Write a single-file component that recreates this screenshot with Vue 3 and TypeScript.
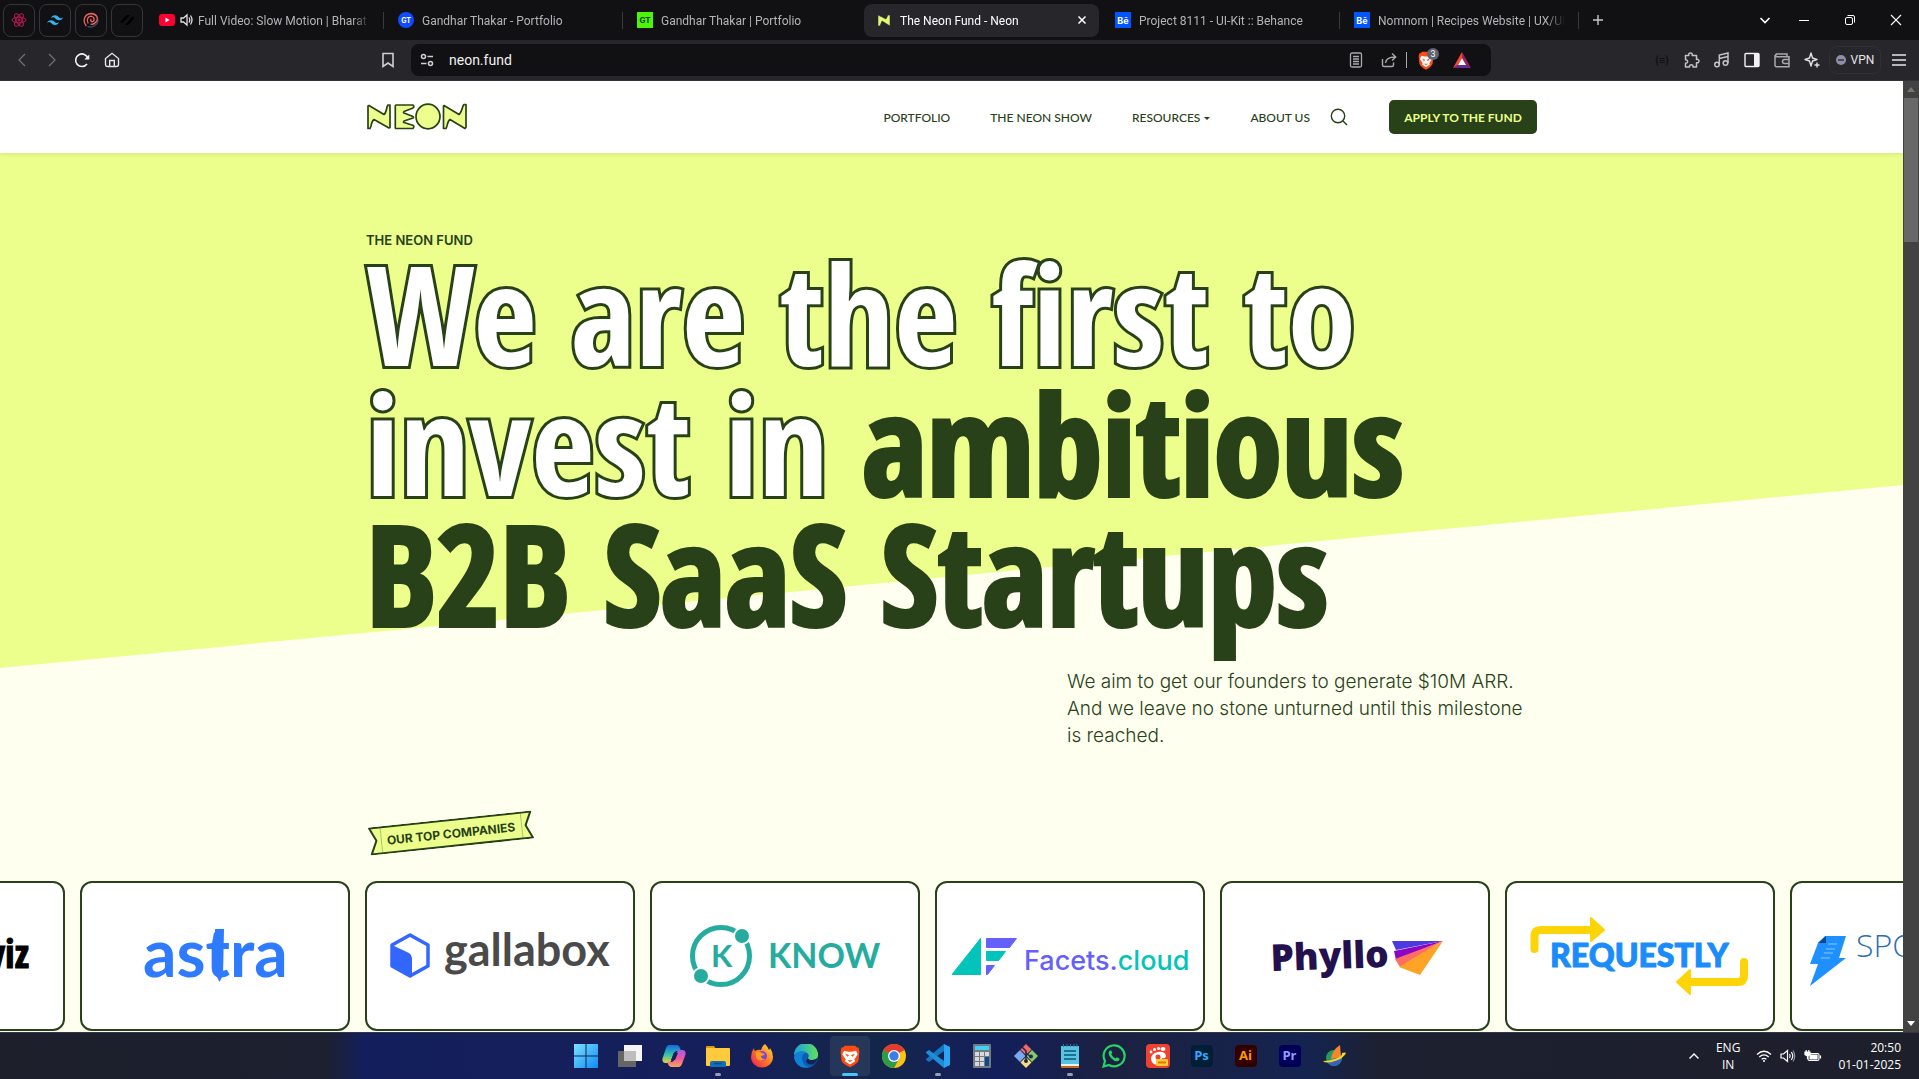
<script setup lang="ts">
import { ref } from 'vue'

interface Tab {
  id: string
  title: string
  kind: 'youtube' | 'gt-blue' | 'gt-green' | 'neon' | 'behance'
  active?: boolean
}

const tabs: Tab[] = [
  { id: 't1', title: 'Full Video: Slow Motion | Bharat', kind: 'youtube' },
  { id: 't2', title: 'Gandhar Thakar - Portfolio', kind: 'gt-blue' },
  { id: 't3', title: 'Gandhar Thakar | Portfolio', kind: 'gt-green' },
  { id: 't4', title: 'The Neon Fund - Neon', kind: 'neon', active: true },
  { id: 't5', title: 'Project 8111 - UI-Kit :: Behance', kind: 'behance' },
  { id: 't6', title: 'Nomnom | Recipes Website | UX/UI', kind: 'behance' },
]

const address = ref('neon.fund')
</script>

<template>
  <div class="desktop">
    <header class="tabstrip">
      <div class="pinned">
        <button class="pin" aria-label="React">
          <svg width="16" height="16" viewBox="0 0 16 16" fill="none" stroke="#b8184f" stroke-width="1">
            <ellipse cx="8" cy="8" rx="7" ry="2.8" /><ellipse cx="8" cy="8" rx="7" ry="2.8" transform="rotate(60 8 8)" /><ellipse cx="8" cy="8" rx="7" ry="2.8" transform="rotate(120 8 8)" /><circle cx="8" cy="8" r="1" fill="#c2185b" />
          </svg>
        </button>
        <button class="pin" aria-label="Tailwind">
          <svg width="16" height="16" viewBox="0 0 24 24" fill="#2fb4f0"><path d="M12 5c-3.200 0-5.200 1.600-6 4.800 1.200-1.600 2.600-2.200 4.200-1.800.9.2 1.600.9 2.300 1.600C13.700 10.800 15 12.200 18 12.200c3.200 0 5.200-1.600 6-4.800-1.200 1.600-2.600 2.200-4.200 1.800-.9-.2-1.600-.9-2.300-1.600C16.300 6.400 15 5 12 5zM6 12.200c-3.200 0-5.200 1.600-6 4.800 1.200-1.600 2.600-2.200 4.200-1.800.9.2 1.600.9 2.300 1.600C7.700 18 9 19.400 12 19.400c3.200 0 5.200-1.600 6-4.800-1.200 1.600-2.600 2.200-4.200 1.800-.9-.2-1.600-.9-2.300-1.600-1.200-1.200-2.500-2.600-5.500-2.600z" /></svg>
        </button>
        <button class="pin" aria-label="Swirl">
          <svg width="16" height="16" viewBox="0 0 16 16" fill="none" stroke-width="1.300" stroke-linecap="round"><path d="M5 14.700c5 1.300 10-2 10-7" stroke="#3c4a66" /><path d="M3 13.500C-.5 9 1 2 8 1.500c5.500 0 8 5 5 8.500-1.500 1.800-3.500 2.500-5 2.200" stroke="#f0655a" /><path d="M5 11C3 7 5.500 4 8.500 4.300c3 .4 3.500 4 1.500 5.200-1.500.8-2.800-.6-2-2" stroke="#f0655a" /></svg>
        </button>
        <button class="pin" aria-label="Slashes">
          <svg width="16" height="16" viewBox="0 0 16 16" fill="#000"><path d="M1 10 8 3h3L3 11zM6 13l7-8h2v2l-6 6z" /></svg>
        </button>
      </div>
      <div class="tabs" role="tablist">
        <div v-for="tab in tabs" :key="tab.id" class="tab" :class="{ active: tab.active }" role="tab" :aria-selected="!!tab.active">
          <template v-if="tab.kind === 'youtube'">
            <svg width="16" height="16" viewBox="0 0 16 16"><rect y="2" width="16" height="12" rx="3" fill="#f03" /><path d="M6.500 5.500v5L10.500 8z" fill="#fff" /></svg>
            <svg class="sound" width="13" height="14" viewBox="0 0 13 14" fill="none" stroke="#e0e0e0" stroke-width="1.300"><path d="M1 5h2.500L7 2v10L3.500 9H1z" /><path d="M9 4.500q1.500 2.500 0 5M10.500 2.500q3 4.500 0 9" /></svg>
          </template>
          <svg v-else-if="tab.kind === 'neon'" width="16" height="14" viewBox="0 0 16 14"><path d="M2 2 10 6l2-4h2v11L6 8l-2 5H2z" fill="#e6f87c" stroke="#24331a" stroke-width=".6" /></svg>
          <span v-else class="fav" :class="tab.kind">{{ tab.kind === 'behance' ? 'Bē' : 'GT' }}</span>
          <span class="title">{{ tab.title }}</span>
          <button v-if="tab.active" class="close" aria-label="Close tab">
            <svg width="10" height="10" viewBox="0 0 10 10" stroke="#fff" stroke-width="1.500"><path d="M1.500 1.500l7 7M8.500 1.500l-7 7" /></svg>
          </button>
        </div>
      </div>
      <button class="plain newtab" aria-label="New tab"><svg width="12" height="12" viewBox="0 0 12 12" stroke="#c8c8c8" stroke-width="1.400"><path d="M6 1v10M1 6h10" /></svg></button>
      <div class="winctl">
        <button class="plain" aria-label="Search tabs"><svg width="12" height="12" viewBox="0 0 12 12" fill="none" stroke="#fff" stroke-width="1.600"><path d="M1.500 4 6 8.500 10.500 4" /></svg></button>
        <button class="plain" aria-label="Minimize"><svg width="12" height="12" viewBox="0 0 12 12" stroke="#fff"><path d="M1 6.500h10" /></svg></button>
        <button class="plain" aria-label="Restore"><svg width="12" height="12" viewBox="0 0 12 12" fill="none" stroke="#fff"><rect x="1.500" y="3.500" width="7" height="7" rx="1.500" /><path d="M3.500 1.500H9a1.500 1.500 0 0 1 1.500 1.500v5.500" /></svg></button>
        <button class="plain" aria-label="Close"><svg width="12" height="12" viewBox="0 0 12 12" stroke="#fff" stroke-width="1.100"><path d="M1 1l10 10M11 1 1 11" /></svg></button>
      </div>
    </header>

    <div class="toolbar">
      <div class="navbtns">
        <button class="plain" aria-label="Back"><svg width="10" height="14" viewBox="0 0 10 14" fill="none" stroke="#6f6f75" stroke-width="1.300"><path d="M8 1 2 7l6 6" /></svg></button>
        <button class="plain" aria-label="Forward"><svg width="10" height="14" viewBox="0 0 10 14" fill="none" stroke="#6f6f75" stroke-width="1.300"><path d="M2 1l6 6-6 6" /></svg></button>
        <button class="plain" aria-label="Reload"><svg width="16" height="16" viewBox="0 0 16 16" fill="none" stroke="#f2f2f2" stroke-width="1.600"><path d="M14 6.500A6.300 6.300 0 1 0 13 12" /><path d="M15.300 2.500v5h-5z" fill="#f2f2f2" stroke="none" /></svg></button>
        <button class="plain" aria-label="Home"><svg width="16" height="16" viewBox="0 0 16 16" fill="none" stroke="#e6e6e6" stroke-width="1.400"><path d="M1.500 6.500 8 1.300l6.500 5.200v6a2 2 0 0 1-2 2h-9a2 2 0 0 1-2-2z" /><path d="M5.700 14V8.500h4.600V14" /></svg></button>
        <button class="plain mark" aria-label="Bookmark"><svg width="14" height="18" viewBox="0 0 14 18" fill="none" stroke="#d0d0d4" stroke-width="1.600"><path d="M2 2.500h10v13L7 12l-5 3.500z" /></svg></button>
      </div>
      <div class="omnibox">
        <svg width="14" height="14" viewBox="0 0 14 14" fill="none" stroke="#d0d0d4" stroke-width="1.500"><circle cx="3.500" cy="3.500" r="2" /><path d="M7.500 3.500H13M1 10.500h5.500" /><circle cx="10.500" cy="10.500" r="2" /></svg>
        <input v-model="address" class="url" type="text" aria-label="Address" />
        <svg width="14" height="16" viewBox="0 0 14 16" fill="none" stroke="#a9a9ad" stroke-width="1.300"><rect x="1.500" y="1" width="11" height="14" rx="1.500" /><path d="M4 4.500h6M4 7h6M4 9.500h6M4 12h6" /></svg>
        <svg class="share" width="18" height="16" viewBox="0 0 18 16" fill="none" stroke="#a9a9ad" stroke-width="1.400"><path d="M2.500 7v6a1.500 1.500 0 0 0 1.500 1.500h8a1.500 1.500 0 0 0 1.500-1.500v-2.500" /><path d="M5.500 11C6 7 9 5 15 5M12 1.500 15.700 5 12 8.500" /></svg>
        <span class="sep"></span>
        <span class="shield">
          <svg width="16" height="19" viewBox="0 0 24 28"><path d="M6 1h12l2 2 2 0 1 5-1 10q-1 5-10 10Q3 23 2 18L1 8l1-5h2z" fill="#ff4a12" /><path d="M5 7l5 1h4l5-1 2 5-4 6 1 2-6 4-6-4 1-2-4-6z" fill="#fff" /><path d="M6 11l5 2-2 2zM18 11l-5 2 2 2zM9 19h6l-3 2z" fill="#ff4a12" /></svg>
          <span class="count">3</span>
        </span>
        <svg width="18" height="17" viewBox="0 0 18 17"><path d="M9 0 0 16l5-3 4-7z" fill="#ff4724" /><path d="M9 0l9 16-5-3-4-7z" fill="#9e1f63" /><path d="M0 16h18l-5-3H5z" fill="#662d91" /><path d="M9 6l4 7H5z" fill="#fff" /></svg>
      </div>
      <div class="exts">
        <button class="plain ext faint" aria-label="Code">{≡}</button>
        <button class="plain ext" aria-label="Extensions"><svg width="18" height="18" viewBox="0 0 18 18" fill="none" stroke="#c4c4c8" stroke-width="1.500" stroke-linejoin="round"><path d="M2.500 4.500h3.300c-1-3.500 4.400-3.500 3.400 0h4.300v4c3.300-1 3.300 4.200 0 3.200v4.300h-3.500c.7-3-4-3-3.500 0H2.500v-3.800c2.800.4 2.800-3.600 0-3.400z" /></svg></button>
        <button class="plain ext" aria-label="Music"><svg width="18" height="18" viewBox="0 0 18 18" fill="none" stroke="#c4c4c8" stroke-width="1.500"><circle cx="4" cy="13.500" r="2.300" /><circle cx="12.500" cy="12" r="2.300" /><path d="M6.300 13.500V4L15 2v10M6.300 7.500 15 5.500" /></svg></button>
        <button class="plain ext" aria-label="Sidebar"><svg width="18" height="18" viewBox="0 0 18 18"><rect x="2" y="2.500" width="14" height="13" rx="1" fill="none" stroke="#f2f2f2" stroke-width="1.400" /><path d="M11 2.500h5v13h-5z" fill="#f2f2f2" /></svg></button>
        <button class="plain ext" aria-label="Wallet"><svg width="18" height="18" viewBox="0 0 18 18" fill="none" stroke="#a9a9ad" stroke-width="1.500"><path d="M14 5V3H3.500a1.500 1.500 0 0 0 0 2.700H16v10H3.500A1.500 1.500 0 0 1 2 14V4" /><path d="M16 8.500h-4.500a2 2 0 0 0 0 4H16" /></svg></button>
        <button class="plain ext" aria-label="Leo"><svg width="18" height="18" viewBox="0 0 18 18" fill="none" stroke="#e0e0e4" stroke-width="1.400" stroke-linejoin="round"><path d="M8 2l1.500 5L14 8.500 9.500 10 8 15 6.500 10 2 8.500 6.500 7z" /><path d="M14 11.500v5M11.500 14h5" /></svg></button>
        <button class="vpn"><svg width="10" height="10" viewBox="0 0 10 10"><circle cx="5" cy="5" r="5" fill="#8d8fa6" /><path d="M2 5h6" stroke="#303040" stroke-width="1.500" /></svg>VPN</button>
        <button class="plain menu" aria-label="Menu"><svg width="16" height="14" viewBox="0 0 16 14" stroke="#e6e6e6" stroke-width="1.400"><path d="M1 2h14M1 7h14M1 12h14" /></svg></button>
      </div>
    </div>

    <div class="viewport">
      <div class="page">
        <header class="site-header">
          <div class="container bar">
            <a href="#" aria-label="Neon">
              <svg class="logo" width="102" height="32" viewBox="0 0 102 32" fill="#ecff8c" stroke="#284118" stroke-width="1.700" stroke-linejoin="round">
                <path d="M3 4.500 18 13.500Q20 12 21 6l1-2h2V26.500L23 27 8 18.500Q6 20 5 25L4 27.500H2V5z" />
                <path d="M30 4h17q1.500 1.500 0 3L38 10.500q-1 1 0 1.500l9 3.500q1 1 0 1.500l-9 3q-1 1 0 1.500l9.500 3q1 1.500-.5 3H30q-.7 0-.7-1V5q0-1 .7-1z" />
                <ellipse cx="62" cy="15.500" rx="12" ry="12.300" />
                <path d="M78 4.500 93 13.500Q95 12 97 5l1-1.500h2V26.500L99 27.500 84 18.500Q82 20 81 25l-1 2.500h-2.500V5z" />
              </svg>
            </a>
            <nav class="links" aria-label="Main">
              <a href="#">PORTFOLIO</a>
              <a href="#">THE NEON SHOW</a>
              <a href="#">RESOURCES<span class="caret"></span></a>
              <a href="#">ABOUT US</a>
            </nav>
            <button class="plain find" aria-label="Search"><svg width="18" height="18" viewBox="0 0 18 18" fill="none" stroke="#284118" stroke-width="1.400"><circle cx="8" cy="8" r="6.700" /><path d="M12.800 12.800 17 17" /></svg></button>
            <button class="apply">APPLY TO THE FUND</button>
          </div>
        </header>

        <main class="hero">
          <div class="container">
            <p class="eyebrow">THE NEON FUND</p>
            <h1><span class="outlined">We are the first to<br />invest in</span> ambitious<br />B2B SaaS Startups</h1>
            <p class="lede">We aim to get our founders to generate $10M ARR. And we leave no stone unturned until this milestone is reached.</p>
            <div class="ribbon">
              <svg width="166" height="28" viewBox="0 0 166 28" fill="#ecff8c" stroke="#284118" stroke-width="2" stroke-linejoin="round"><path d="M2 1h162l-6 13 6 13H2l6-13z" /><path d="M13 2v24M154 2v24" stroke-width=".3" /></svg>
              <span>OUR TOP COMPANIES</span>
            </div>
          </div>

          <div class="companies">
            <div class="card">
              <svg viewBox="0 0 266 146"><text class="condensed bold" x="232" y="85" font-size="40" text-anchor="end" fill="#000" stroke="#000">viz</text></svg>
            </div>
            <div class="card">
              <svg viewBox="0 0 266 146" fill="#2f7bff"><text class="lato bold" x="61" y="94" font-size="66">astra</text><path d="M133 46h9l-1 46-3.500 7L134 92z" /></svg>
            </div>
            <div class="card">
              <svg viewBox="0 0 266 146"><path d="M43 52 61 62v21L43 93 25 83V62z" fill="none" stroke="#3366ff" stroke-width="3.500" stroke-linejoin="round" /><path d="M25 62l17 8q3 2 3 5v18l-2 1-18-11z" fill="#3366ff" /><text class="lato bold" x="77" y="83" font-size="45" fill="#4a4a4a">gallabox</text></svg>
            </div>
            <div class="card">
              <svg viewBox="0 0 266 146" fill="#25ac9f"><circle cx="69" cy="73" r="28.500" fill="none" stroke="#25ac9f" stroke-width="5" /><circle cx="90" cy="53" r="8" stroke="#fff" stroke-width="2" /><circle cx="49" cy="93" r="8" stroke="#fff" stroke-width="2" /><text class="lato bold" x="59" y="84" font-size="31">K</text><text class="lato bold" x="116" y="85" font-size="34">KNOW</text></svg>
            </div>
            <div class="card">
              <svg viewBox="0 0 266 146"><g fill="#03c4bb" stroke="#03c4bb" stroke-linejoin="round"><path d="M15 91.500 43.500 55.500v36z" /><path d="M49.500 68.500h19l-7 9h-12z" /></g><g fill="#6560fb" stroke="#6560fb" stroke-linejoin="round"><path d="M49.500 55.500h30l-7 9h-23z" /><path d="M49.500 82.500h8l-7 9h-1z" /></g><text class="inter" x="87" y="87" font-size="27" fill="#6560fb">Facets.<tspan fill="#03c4bb">cloud</tspan></text></svg>
            </div>
            <div class="card">
              <svg viewBox="0 0 266 146"><text class="open heavy" x="49" y="88" font-size="37" fill="#23104f" transform="rotate(-2 50 88)">Phyllo</text><path d="M170 58h51L174 67z" fill="#4a3ae0" /><path d="M172 68 221 58 174 77z" fill="#8a05c8" /><path d="M173 76 221 58 178 84z" fill="#ff6f61" /><path d="M177 84 221 58 198 92z" fill="#ffa326" /></svg>
            </div>
            <div class="card">
              <svg viewBox="0 0 266 146"><g fill="none" stroke="#fdd408" stroke-width="8" stroke-linecap="round"><path d="M27.500 66V53q0-6 6-6H83" /><path d="M184 99h47q6 0 6-6V79" /></g><g fill="#fdd408" stroke="#fdd408" stroke-width="2" stroke-linejoin="round"><path d="M84 35 97 47 84 58z" /><path d="M183 87 170 99l13 12z" /></g><text class="lato black" x="43" y="84" font-size="32" fill="#1a8cfc" stroke="#1a8cfc" stroke-linejoin="round">REQUESTLY</text></svg>
            </div>
            <div class="card">
              <svg viewBox="0 0 266 146"><path d="M33 53h21l-7 22h7L18 103l8-22h-8l8-21z" fill="#1e90ff" /><path d="M34 53v7h-8z" fill="#0b4a92" /><path d="M36 61h9M34 66h9M32 70h9M29 75h9" stroke="#8cc6ff" /><text class="open light" x="64" y="74" font-size="32" fill="#2d6fb5">SPO</text></svg>
            </div>
          </div>
        </main>
      </div>
      <div class="scrollbar">
        <span class="up"></span>
        <span class="thumb"></span>
        <span class="down"></span>
      </div>
    </div>

    <footer class="taskbar">
      <div class="side"></div>
      <div class="apps">
        <button class="app" aria-label="Start"><svg viewBox="0 0 24 24"><defs><linearGradient id="win" x1="0" y1="0" x2="1" y2="1"><stop offset="0" stop-color="#7fe0ff" /><stop offset="1" stop-color="#0a8cf0" /></linearGradient></defs><path d="M0 0h11.500v11.500H0zM12.500 0H24v11.500H12.500zM0 12.500h11.500V24H0zM12.500 12.500H24V24H12.500z" fill="url(#win)" /></svg></button>
        <button class="app" aria-label="Task view"><svg viewBox="0 0 24 24"><rect x="6" y="1" width="18" height="16" fill="#f5f5f5" /><rect x="0" y="7" width="18" height="16" fill="#666" /><rect x="6" y="7" width="12" height="10" fill="#bdbdbd" /></svg></button>
        <button class="app" aria-label="Copilot"><svg viewBox="0 0 24 24"><defs><linearGradient id="cpa" x1="0" y1="0" x2="0" y2="1"><stop offset="0" stop-color="#1668e0" /><stop offset=".5" stop-color="#2bc0b0" /><stop offset="1" stop-color="#e8d23a" /></linearGradient><linearGradient id="cpb" x1="0" y1="0" x2="0" y2="1"><stop offset="0" stop-color="#a25bf0" /><stop offset=".5" stop-color="#f0589a" /><stop offset="1" stop-color="#f9a55c" /></linearGradient></defs><path d="M7 1h8q2 0 3 3l1 3h-4q-3 0-4 4l-2 6q-1 2-3 2H3q-4-1-2-6l3-9q1-3 3-3z" fill="url(#cpa)" /><path d="M17 23H9q-2 0-3-3l-1-2h4q3 0 4-4l2-6q1-2 3-2h3q4 1 2 6l-3 8q-1 3-3 3z" fill="url(#cpb)" /><path d="M12 9h4l-3 7H9z" fill="#17205c" /></svg></button>
        <button class="app running" aria-label="File Explorer"><svg viewBox="0 0 24 24"><path d="M0 3q0-1 1-1h7l2 3H0z" fill="#e09a10" /><rect y="4" width="24" height="18" rx="1" fill="#ffcb3c" /><path d="M4 23v-4q0-2 2-2h12q2 0 2 2v4z" fill="#0f70b8" /><path d="M8 19.500h8" stroke="#05497f" stroke-width="1.500" /></svg></button>
        <button class="app" aria-label="Firefox"><svg viewBox="0 0 24 24"><defs><linearGradient id="ff" x1="1" y1="0" x2="0" y2="1"><stop offset="0" stop-color="#ffe14a" /><stop offset=".5" stop-color="#ff7a1c" /><stop offset="1" stop-color="#f0106a" /></linearGradient></defs><path d="M15 0q3 3 4 6 1-1 1-2 3 4 3 9a11 10.500 0 0 1-22 0q0-5 3-9 0 2 1 3 3-2 6-1 1-4 4-6z" fill="url(#ff)" /><circle cx="12" cy="12" r="5" fill="#8345d8" /><path d="M6 8q4-1 6 1l3 1q-2 2-4 2 0 3 4 3-5 4-9-1z" fill="#ff9a1f" /></svg></button>
        <button class="app" aria-label="Edge"><svg viewBox="0 0 24 24"><defs><linearGradient id="ed" x1="0" y1="0" x2="1" y2="0"><stop offset="0" stop-color="#1ba0e0" /><stop offset="1" stop-color="#5fe05a" /></linearGradient></defs><circle cx="12" cy="12" r="12" fill="#0d5cb0" /><path d="M0 11A12 12 0 0 1 24 11q0 5-6 5-4 0-4-2 2-3-1-5Q7 5 0 11z" fill="url(#ed)" /><path d="M13 9q-5 0-5 5 0 7 7 9Q4 26 0 14q1-6 7-7 4 0 6 2z" fill="#1181d8" /><path d="M14 14q0 2 4 2 3 0 5.500-2-1 4-3.500 6-6 2-8-3z" fill="#16215a" /></svg></button>
        <button class="app current" aria-label="Brave"><svg viewBox="0 0 24 28"><path d="M6 2h12l2 2 2 0 1 5-1 10q-1 4-10 8Q3 23 2 19L1 9l1-5h2z" fill="#ff4a12" /><path d="M5 8l5 1h4l5-1 2 4-4 6 1 2-6 4-6-4 1-2-4-6z" fill="#fff" /><path d="M6 11l5 2-2 2zM18 11l-5 2 2 2zM9 19h6l-3 2z" fill="#ff4a12" /></svg></button>
        <button class="app" aria-label="Chrome"><svg viewBox="0 0 24 24"><circle cx="12" cy="12" r="12" fill="#fbc116" /><path d="M12 12 1.600 6A12 12 0 0 1 22.400 6H12z" fill="#e33b2e" /><path d="M1.600 6A12 12 0 0 0 12 24l5-9-5-3z" fill="#2b9c48" /><path d="M12 6h10.400L12 12 1.600 6z" fill="#e33b2e" /><circle cx="12" cy="12" r="6" fill="#fff" /><circle cx="12" cy="12" r="4.700" fill="#3b7ded" /></svg></button>
        <button class="app running" aria-label="VS Code"><svg viewBox="0 0 24 24"><path d="M18 0l6 3v18l-6 3z" fill="#2aa4f2" /><path d="M18 0v7L3 18l-3-2v-1z" fill="#1277c0" /><path d="M18 24v-7L3 6 0 8v1z" fill="#1c8ed8" /></svg></button>
        <button class="app" aria-label="Calculator"><svg viewBox="0 0 24 24"><rect x="3" width="18" height="24" rx="1" fill="#757a80" /><rect x="5" y="2" width="14" height="4" fill="#3fd0f5" /><path d="M5 8h4v4H5zM10 8h4v4h-4zM15 8h4v4h-4zM5 13h4v4H5zM10 13h4v4h-4zM5 18h4v4H5zM10 18h4v4h-4z" fill="#d5d8dc" /><path d="M15 13h4v9h-4z" fill="#0c4a8a" /></svg></button>
        <button class="app" aria-label="Git"><svg viewBox="0 0 24 24"><path d="M12 0l5.500 5.500L12 11 6.500 5.500z" fill="#f06a6a" /><path d="M6 6l5.500 6L6 18 0 12z" fill="#7aa7ee" /><path d="M18 6l6 6-6 6-5.500-6z" fill="#86c968" /><path d="M12 13l5.500 5.500L12 24l-5.500-5.500z" fill="#f5dc82" /><path d="M8 3l4 4v10M12 9l5 4" stroke="#222b44" stroke-width="1.600" fill="none" /><circle cx="12" cy="17" r="2" fill="#222b44" /><circle cx="17" cy="12.500" r="2" fill="#222b44" /></svg></button>
        <button class="app running" aria-label="Notepad"><svg viewBox="0 0 24 24"><rect x="3" y="2" width="18" height="20" fill="#58c4e2" /><path d="M3 20h18v2H3z" fill="#f2f2f2" /><path d="M3 22h18v2H3z" fill="#c46a1a" /><path d="M6 7h12M6 11h12M6 15h12" stroke="#0d5578" stroke-width="1.500" /><path d="M5.500 0v3M9 0v3M12.500 0v3M16 0v3M19 0v3" stroke="#2f7f9c" /></svg></button>
        <button class="app" aria-label="WhatsApp"><svg viewBox="0 0 24 24"><path d="M1.500 22.500 3 17A10.500 10.500 0 1 1 7 21z" fill="none" stroke="#25d366" stroke-width="2.200" /><path d="M8 6.500q1-.5 1.500.5l.8 2-1 1.300q1.500 3 4.300 4.200l1.300-1.300 2.600 1.300q.5 2-2 2.700-3 .5-6-2.700T6.500 9q.3-1.700 1.500-2.500z" fill="#25d366" /></svg></button>
        <button class="app" aria-label="Gnome Player"><svg viewBox="0 0 24 24"><rect width="24" height="24" rx="4" fill="#f0402f" /><path d="M12 8q7-1 8 4 0 3-4 2-1 6-5 7-6-1-6-7 1-5 7-6z" fill="#fff" /><circle cx="12" cy="13" r="2.500" fill="#f0402f" /><g fill="#fff"><ellipse cx="17" cy="5" rx="2.500" ry="2" /><circle cx="12.500" cy="4.500" r="1.600" /><circle cx="8.500" cy="5.500" r="1.500" /><circle cx="5" cy="8" r="1.400" /></g><rect x="10" y="15" width="12" height="7" rx="1" fill="#ffce2e" /><path d="M12 18.500h8" stroke="#e07010" stroke-width="2" /></svg></button>
        <button class="app" aria-label="Photoshop"><span class="adobe ps">Ps</span></button>
        <button class="app" aria-label="Illustrator"><span class="adobe ai">Ai</span></button>
        <button class="app" aria-label="Premiere"><span class="adobe pr">Pr</span></button>
        <button class="app" aria-label="Download Manager"><svg viewBox="0 0 24 24"><circle cx="12" cy="14" r="8" fill="#1f9a62" /><path d="M12 14l8 1q-2 7-9 7-5-2-5-4z" fill="#3a5fc0" /><path d="M18 1q-8 5-9 14l10-2z" fill="#f5872a" /><path d="M1 17q3 3 12 0t11-8q-1-1-4 0 1 3-6 5.500T1 17z" fill="#f2d929" /></svg></button>
      </div>
      <div class="side tray">
        <svg width="12" height="12" viewBox="0 0 12 12" fill="none" stroke="#fff" stroke-width="1.400"><path d="M1.500 8.500 6 4l4.500 4.500" /></svg>
        <span class="lang">ENG<br />IN</span>
        <span class="status">
          <svg width="16" height="14" viewBox="0 0 16 14" fill="none" stroke="#fff" stroke-width="1.300"><path d="M1 5.500q7-6.500 14 0M3.300 8q4.700-4.300 9.400 0M5.600 10.300q2.400-2 4.800 0" /><circle cx="8" cy="12" r="1" fill="#fff" stroke="none" /></svg>
          <svg width="16" height="14" viewBox="0 0 16 14" fill="none" stroke="#fff" stroke-width="1.200"><path d="M1 5h2.500L7.500 1.500v11L3.500 9H1zM9.500 5q1.500 2 0 4M11.300 3.200q3 3.800 0 7.600" /><path d="M13 1.500q3.500 5.500 0 11" stroke="#8b90a8" /></svg>
          <svg width="18" height="14" viewBox="0 0 18 14" fill="none" stroke="#fff" stroke-width="1.200"><rect x="4" y="4.500" width="11" height="7" rx="1.500" /><path d="M6 6h7v4H6z" fill="#fff" /><path d="M16.500 6.500v3" /><path d="M1 3h5v2.500q-2.500 2.500-5 0zM2.200 3V1M4.800 3V1M3.500 7v3" fill="#fff" /></svg>
        </span>
        <span class="clock">20:50<br />01-01-2025</span>
      </div>
    </footer>
  </div>
</template>

<style>
body {
  margin: 0;
  overflow: hidden;
}
</style>

<style scoped>
.desktop {
  --ink: #284118;
  --lime: #ecff8c;
  --chrome: Roboto, 'Noto Sans', sans-serif;
  display: flex;
  flex-direction: column;
  height: 100vh;
  font-family: var(--chrome);
}
.desktop * {
  box-sizing: border-box;
}
button {
  font: inherit;
  color: inherit;
  border: 0;
  padding: 0;
  background: none;
}
svg {
  display: block;
  flex: none;
}
a {
  color: inherit;
  text-decoration: none;
}
.plain {
  display: flex;
  align-items: center;
  justify-content: center;
}

/* Browser chrome */
.tabstrip {
  display: flex;
  align-items: center;
  height: 40px;
  flex: none;
  background: #111113;
  color: #b4b4b8;
  font-size: 12px;
}
.pinned {
  display: flex;
  gap: 4px;
  padding: 0 2px 0 3px;
}
.pin {
  display: grid;
  place-items: center;
  width: 32px;
  height: 33px;
  border: 1px solid #35353a;
  border-radius: 8px;
}
.tabs {
  display: flex;
}
.tab {
  position: relative;
  display: flex;
  align-items: center;
  gap: 8px;
  width: 239px;
  height: 33px;
  padding: 0 14px;
  border-radius: 8px;
}
.tab:not(.active)::after {
  content: '';
  position: absolute;
  right: 0;
  top: 8px;
  height: 17px;
  border-right: 1px solid #3a3a3e;
}
.tab:nth-child(3)::after {
  display: none;
}
.tab.active {
  width: 235px;
  margin: 0 2px;
  padding: 0 12px;
  background: #26262b;
  color: #fff;
}
.title {
  flex: 1;
  min-width: 0;
  line-height: 18px;
  padding-top: 1px;
  overflow: hidden;
  white-space: nowrap;
  -webkit-mask-image: linear-gradient(90deg, #000 90%, transparent);
  mask-image: linear-gradient(90deg, #000 90%, transparent);
}
.sound {
  margin: 0 -3px;
}
.fav {
  display: grid;
  place-items: center;
  width: 16px;
  height: 16px;
  font: 700 8px Inter, sans-serif;
  color: #fff;
}
.gt-blue {
  border-radius: 50%;
  background: #0f4bff;
  font-size: 7px;
}
.gt-green {
  background: #4cf506;
  color: #143a08;
}
.behance {
  background: #0057ff;
  font-size: 9px;
}
.newtab {
  width: 38px;
  height: 32px;
}
.winctl {
  display: flex;
  margin-left: auto;
}
.winctl .plain {
  width: 46px;
  height: 38px;
}
.winctl .plain:first-child {
  width: 32px;
}
.toolbar {
  display: flex;
  align-items: center;
  height: 41px;
  flex: none;
  background: #26262b;
  border-bottom: 1px solid #34303b;
  color: #e6e6e6;
}
.navbtns {
  display: flex;
  flex: 1 1 0;
  padding-left: 7px;
}
.navbtns .plain {
  width: 30px;
  height: 32px;
}
.navbtns .mark {
  width: 46px;
  margin-left: auto;
}
.omnibox {
  display: flex;
  align-items: center;
  gap: 15px;
  width: 1080px;
  height: 32px;
  margin-right: 20px;
  padding: 0 20px 0 9px;
  border-radius: 8px;
  background: #111113;
}
.url {
  flex: 1;
  min-width: 0;
  border: 0;
  padding: 0;
  outline: 0;
  background: none;
  color: #f2f2f2;
  font: 14px var(--chrome);
}
.share {
  margin: 0 -7px 0 2px;
}
.sep {
  width: 1px;
  height: 16px;
  background: #a9a9ad;
}
.shield {
  position: relative;
  margin: 0 4px 0 -4px;
}
.count {
  position: absolute;
  left: 9px;
  top: -3px;
  width: 12px;
  height: 12px;
  border-radius: 6px;
  background: #5f6270;
  color: #fff;
  font-size: 9px;
  line-height: 12px;
  text-align: center;
}
.exts {
  display: flex;
  align-items: center;
  justify-content: flex-end;
  flex: 1 1 0;
  padding-right: 4px;
}
.ext {
  width: 30px;
  height: 32px;
}
.faint {
  color: #0c0c0e;
  font-size: 11px;
}
.vpn {
  display: flex;
  align-items: center;
  justify-content: center;
  gap: 5px;
  width: 52px;
  height: 28px;
  margin: 0 2px;
  border: 1px solid #303036;
  border-radius: 8px;
  font-size: 12px;
}
.menu {
  width: 32px;
  height: 32px;
}

/* Web page */
.viewport {
  display: flex;
  flex: 1;
  min-height: 0;
}
.page {
  flex: 1;
  min-width: 0;
  overflow: hidden;
  background: #feffef;
  color: var(--ink);
  font-family: Inter, sans-serif;
}
.container {
  max-width: 1171px;
  margin: 0 auto;
}
.site-header {
  position: relative;
  z-index: 1;
  background: #fff;
  box-shadow: 0 2px 4px rgba(0, 0, 0, 0.08);
}
.bar {
  display: flex;
  align-items: center;
  height: 72px;
}
.links {
  display: flex;
  gap: 40px;
  margin-left: auto;
  font-family: Lato, sans-serif;
  font-size: 12px;
  font-weight: 500;
}
.caret {
  display: inline-block;
  margin-left: 4px;
  vertical-align: middle;
  border: 3px solid transparent;
  border-top-color: var(--ink);
  border-bottom: 0;
}
.find {
  width: 18px;
  margin: 0 41px 0 20px;
}
.apply {
  width: 148px;
  height: 34px;
  border-radius: 5px;
  background: var(--ink);
  color: var(--lime);
  font-family: Lato, sans-serif;
  font-size: 12px;
  font-weight: 700;
  white-space: nowrap;
}
.hero {
  position: relative;
  padding-top: 76px;
}
.hero::before {
  content: '';
  position: absolute;
  inset: 0 0 auto;
  height: 515px;
  background: var(--lime);
  clip-path: polygon(0 0, 100% 0, 100% 332px, 0 100%);
}
.hero > * {
  position: relative;
}
.eyebrow {
  margin: 0;
  font-size: 13px;
  line-height: 22px;
  font-weight: 600;
}
h1 {
  margin: -4px 0 0;
  font-family: 'Open Sans Condensed', 'Roboto Condensed', sans-serif;
  font-size: 138px;
  font-weight: 700;
  line-height: 130px;
  font-variant-ligatures: none;
  white-space: nowrap;
  -webkit-text-stroke: 4px var(--ink);
  paint-order: stroke fill;
}
.outlined {
  color: #fff;
  -webkit-text-stroke-width: 6px;
}
.lede {
  width: 470px;
  margin: 31px 0 0 auto;
  font-size: 19px;
  line-height: 27px;
  font-weight: 300;
}
.ribbon {
  display: grid;
  place-items: center;
  width: 166px;
  height: 28px;
  margin: 70px 0 0 2px;
  transform: rotate(-6deg);
  font-size: 12px;
  font-weight: 700;
}
.ribbon > * {
  grid-area: 1 / 1;
}
.companies {
  display: flex;
  gap: 15px;
  margin: 34px 0 0 -205px;
}
.card {
  flex: none;
  width: 270px;
  height: 150px;
  border: 2px solid var(--ink);
  border-radius: 12px;
  overflow: hidden;
  background: #fff;
}
.lato {
  font-family: Lato, sans-serif;
}
.open {
  font-family: 'Open Sans', sans-serif;
}
.condensed {
  font-family: 'Open Sans Condensed', sans-serif;
}
.inter {
  font-family: Inter, sans-serif;
  font-weight: 500;
}
.bold {
  font-weight: 700;
}
.heavy {
  font-weight: 800;
}
.black {
  font-weight: 900;
}
.light {
  font-weight: 300;
}
.scrollbar {
  display: flex;
  flex-direction: column;
  align-items: center;
  width: 16px;
  padding: 6px 0;
  background: #424242;
}
.up,
.down {
  border: 4px solid transparent;
}
.up {
  border-top: 0;
  border-bottom: 5px solid #777;
}
.down {
  margin-top: auto;
  border-bottom: 0;
  border-top: 5px solid #fff;
}
.thumb {
  width: 14px;
  height: 144px;
  margin-top: 6px;
  background: #686868;
}

/* Taskbar */
.taskbar {
  display: flex;
  align-items: center;
  height: 47px;
  flex: none;
  border-top: 1px solid #33364a;
  background: linear-gradient(90deg, #1d1f2b 0, #1c2030 17%, #131f5c 19%, #151f5a 38%, #14264a 45%, #131f5a 52%, #1c2140 58%, #142350 68%, #1d2030 72%, #1d1f2b 100%);
  color: #fff;
  font-family: 'Open Sans', 'Noto Sans', sans-serif;
  font-size: 12px;
}
.side {
  flex: 1 1 0;
}
.apps {
  display: flex;
  gap: 4px;
}
.app {
  position: relative;
  display: grid;
  place-items: center;
  width: 40px;
  height: 40px;
  border-radius: 4px;
}
.app svg {
  width: 24px;
  height: 24px;
}
.current {
  background: rgba(255, 255, 255, 0.08);
}
.running::after,
.current::after {
  content: '';
  position: absolute;
  bottom: 0;
  left: 17px;
  width: 6px;
  height: 3px;
  border-radius: 2px;
  background: #9a9fb0;
}
.current::after {
  left: 12px;
  width: 16px;
  background: #4cc2ff;
}
.adobe {
  width: 22px;
  height: 22px;
  border-radius: 4px;
  font: 700 13px/21px 'Open Sans', sans-serif;
  text-align: center;
}
.ps {
  background: #001e36;
  color: #31a8ff;
}
.ai {
  background: #330000;
  color: #ff9a00;
}
.pr {
  background: #00005b;
  color: #9999ff;
}
.tray {
  display: flex;
  align-items: center;
  justify-content: flex-end;
  gap: 16px;
  line-height: 17px;
}
.lang {
  text-align: center;
}
.status {
  display: flex;
  gap: 8px;
}
.clock {
  margin-right: 18px;
  text-align: right;
}
</style>
